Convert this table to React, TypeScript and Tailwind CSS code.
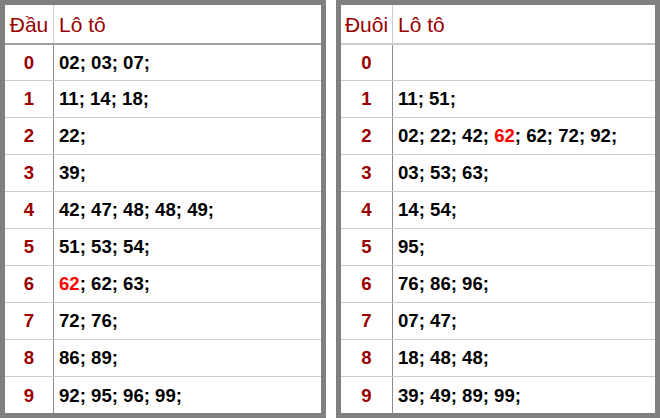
const DAU: (string | { red: string })[][] = [
  ["02; 03; 07;"],
  ["11; 14; 18;"],
  ["22;"],
  ["39;"],
  ["42; 47; 48; 48; 49;"],
  ["51; 53; 54;"],
  [{ red: "62" }, "; 62; 63;"],
  ["72; 76;"],
  ["86; 89;"],
  ["92; 95; 96; 99;"],
];

const DUOI: (string | { red: string })[][] = [
  [],
  ["11; 51;"],
  ["02; 22; 42; ", { red: "62" }, "; 62; 72; 92;"],
  ["03; 53; 63;"],
  ["14; 54;"],
  ["95;"],
  ["76; 86; 96;"],
  ["07; 47;"],
  ["18; 48; 48;"],
  ["39; 49; 89; 99;"],
];

function LotoTable({
  head,
  rows,
  width,
  firstCol,
  headLine,
}: {
  head: string;
  rows: (string | { red: string })[][];
  width: string;
  firstCol: string;
  headLine: string;
}) {
  return (
    <div className={`${width} border-[5px] border-[#808080] bg-white`}>
      <div className={`flex h-[40px] border-b-2 ${headLine}`}>
        <div className={`${firstCol} flex shrink-0 items-center justify-center border-r border-[#cccccc] pt-[2px] text-[21px] text-[#990000]`}>
          {head}
        </div>
        <div className="flex items-center pl-[5px] pt-[2px] text-[21px] text-[#990000]">Lô tô</div>
      </div>
      {rows.map((parts, i) => (
        <div
          key={i}
          className={`flex ${i === 0 ? "h-[36px]" : "h-[37px]"} ${i < rows.length - 1 ? "border-b border-[#cccccc]" : "h-[36px]"}`}
        >
          <div className={`${firstCol} flex shrink-0 items-center justify-center border-r border-[#8c8c8c] text-[18.6px] font-bold text-[#990000]`}>
            {i}
          </div>
          <div className="flex items-center pl-[5px] text-[18.6px] font-bold whitespace-pre text-black">
            {parts.map((p, j) =>
              typeof p === "string" ? (
                <span key={j}>{p}</span>
              ) : (
                <span key={j} className="text-[#ff0000]">
                  {p.red}
                </span>
              )
            )}
          </div>
        </div>
      ))}
    </div>
  );
}

export default function App() {
  return (
    <div
      className="flex h-[418px] w-[660px] gap-[10px] bg-white"
      style={{ fontFamily: '"Liberation Sans", Arial, sans-serif' }}
    >
      <LotoTable head="Đầu" rows={DAU} width="w-[326px]" firstCol="w-[49px]" headLine="border-[#a0a0a0]" />
      <LotoTable head="Đuôi" rows={DUOI} width="w-[324px]" firstCol="w-[52px]" headLine="border-[#cccccc]" />
    </div>
  );
}
